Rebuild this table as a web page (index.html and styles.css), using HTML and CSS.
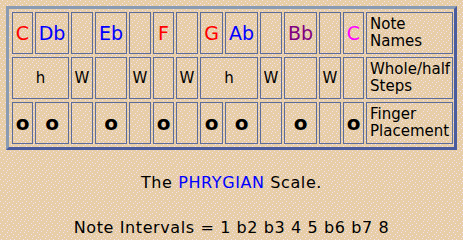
FILE: index.html
```html
<!DOCTYPE html>
<html lang="en">
<head>
<meta charset="utf-8">
<title>The Phrygian Scale</title>
<link rel="stylesheet" href="styles.css">
</head>
<body>
<div class="scale">
  <div class="cell note red">C</div>
  <div class="cell note blue">Db</div>
  <div class="cell"></div>
  <div class="cell note blue">Eb</div>
  <div class="cell"></div>
  <div class="cell note red">F</div>
  <div class="cell"></div>
  <div class="cell note red">G</div>
  <div class="cell note blue">Ab</div>
  <div class="cell"></div>
  <div class="cell note purple">Bb</div>
  <div class="cell"></div>
  <div class="cell note magenta">C</div>
  <div class="cell label">Note<br>Names</div>

  <div class="cell step span2">h</div>
  <div class="cell step">W</div>
  <div class="cell"></div>
  <div class="cell step">W</div>
  <div class="cell"></div>
  <div class="cell step">W</div>
  <div class="cell step span2">h</div>
  <div class="cell step">W</div>
  <div class="cell"></div>
  <div class="cell step">W</div>
  <div class="cell"></div>
  <div class="cell label">Whole/half<br>Steps</div>

  <div class="cell finger">o</div>
  <div class="cell finger">o</div>
  <div class="cell"></div>
  <div class="cell finger">o</div>
  <div class="cell"></div>
  <div class="cell finger">o</div>
  <div class="cell"></div>
  <div class="cell finger">o</div>
  <div class="cell finger">o</div>
  <div class="cell"></div>
  <div class="cell finger">o</div>
  <div class="cell"></div>
  <div class="cell finger">o</div>
  <div class="cell label">Finger<br>Placement</div>
</div>
<p class="caption title">The <span class="mode">PHRYGIAN</span> Scale.</p>
<p class="caption intervals">Note Intervals = 1 b2 b3 4 5 b6 b7 8</p>
</body>
</html>
```
FILE: styles.css
```css
html, body {
  margin: 0;
  padding: 0;
}
body {
  width: 463px;
  height: 240px;
  overflow: hidden;
  font-family: "DejaVu Sans", Verdana, sans-serif;
  color: #000;
  background-color: #e7cea7;
  background-image: url("data:image/svg+xml,%3Csvg xmlns='http://www.w3.org/2000/svg' width='13' height='11' shape-rendering='crispEdges'%3E%3Cg fill='%23f4def0'%3E%3Crect x='2' y='0' width='1' height='1'/%3E%3Crect x='7' y='1' width='1' height='1'/%3E%3Crect x='11' y='1' width='1' height='1'/%3E%3Crect x='0' y='3' width='1' height='1'/%3E%3Crect x='5' y='3' width='1' height='1'/%3E%3Crect x='9' y='4' width='1' height='1'/%3E%3Crect x='3' y='5' width='1' height='1'/%3E%3Crect x='12' y='6' width='1' height='1'/%3E%3Crect x='6' y='7' width='1' height='1'/%3E%3Crect x='1' y='8' width='1' height='1'/%3E%3Crect x='10' y='8' width='1' height='1'/%3E%3Crect x='4' y='9' width='1' height='1'/%3E%3Crect x='8' y='10' width='1' height='1'/%3E%3Crect x='12' y='10' width='1' height='1'/%3E%3Crect x='7' y='5' width='1' height='1'/%3E%3C/g%3E%3C/svg%3E");
}

.scale {
  display: grid;
  grid-template-columns: 21px 34px 22px 32px 22px 21px 22px 23px 33px 22px 33px 22px 21px 87px;
  grid-auto-rows: 42px;
  column-gap: 2px;
  row-gap: 3px;
  width: max-content;
  margin: 6px 0 0 6px;
  padding: 3px 1px 3px 3px;
  border: 3px solid;
  border-color: #8a9bb3 #4a5c9f #4a5c9f #8a9bb3;
}

.cell {
  box-sizing: border-box;
  border: 1px solid #5b6c9c;
  display: flex;
  align-items: center;
  justify-content: center;
}

.span2 {
  grid-column: span 2;
}

.note {
  font-size: 19px;
}
.red { color: #ff0000; }
.blue { color: #0000ff; }
.purple { color: #800080; }
.magenta { color: #ff00ff; }

.step {
  font-size: 15px;
}

.finger {
  font-size: 20px;
  font-weight: bold;
}

.label {
  justify-content: flex-start;
  padding-left: 3px;
  font-size: 15px;
  line-height: 17.5px;
}

.caption {
  margin: 0;
  text-align: center;
  font-size: 16px;
  line-height: 19px;
  letter-spacing: 0.6px;
}
.title {
  margin-top: 23px;
}
.intervals {
  margin-top: 26px;
}
.mode {
  color: #0000ff;
}
```
